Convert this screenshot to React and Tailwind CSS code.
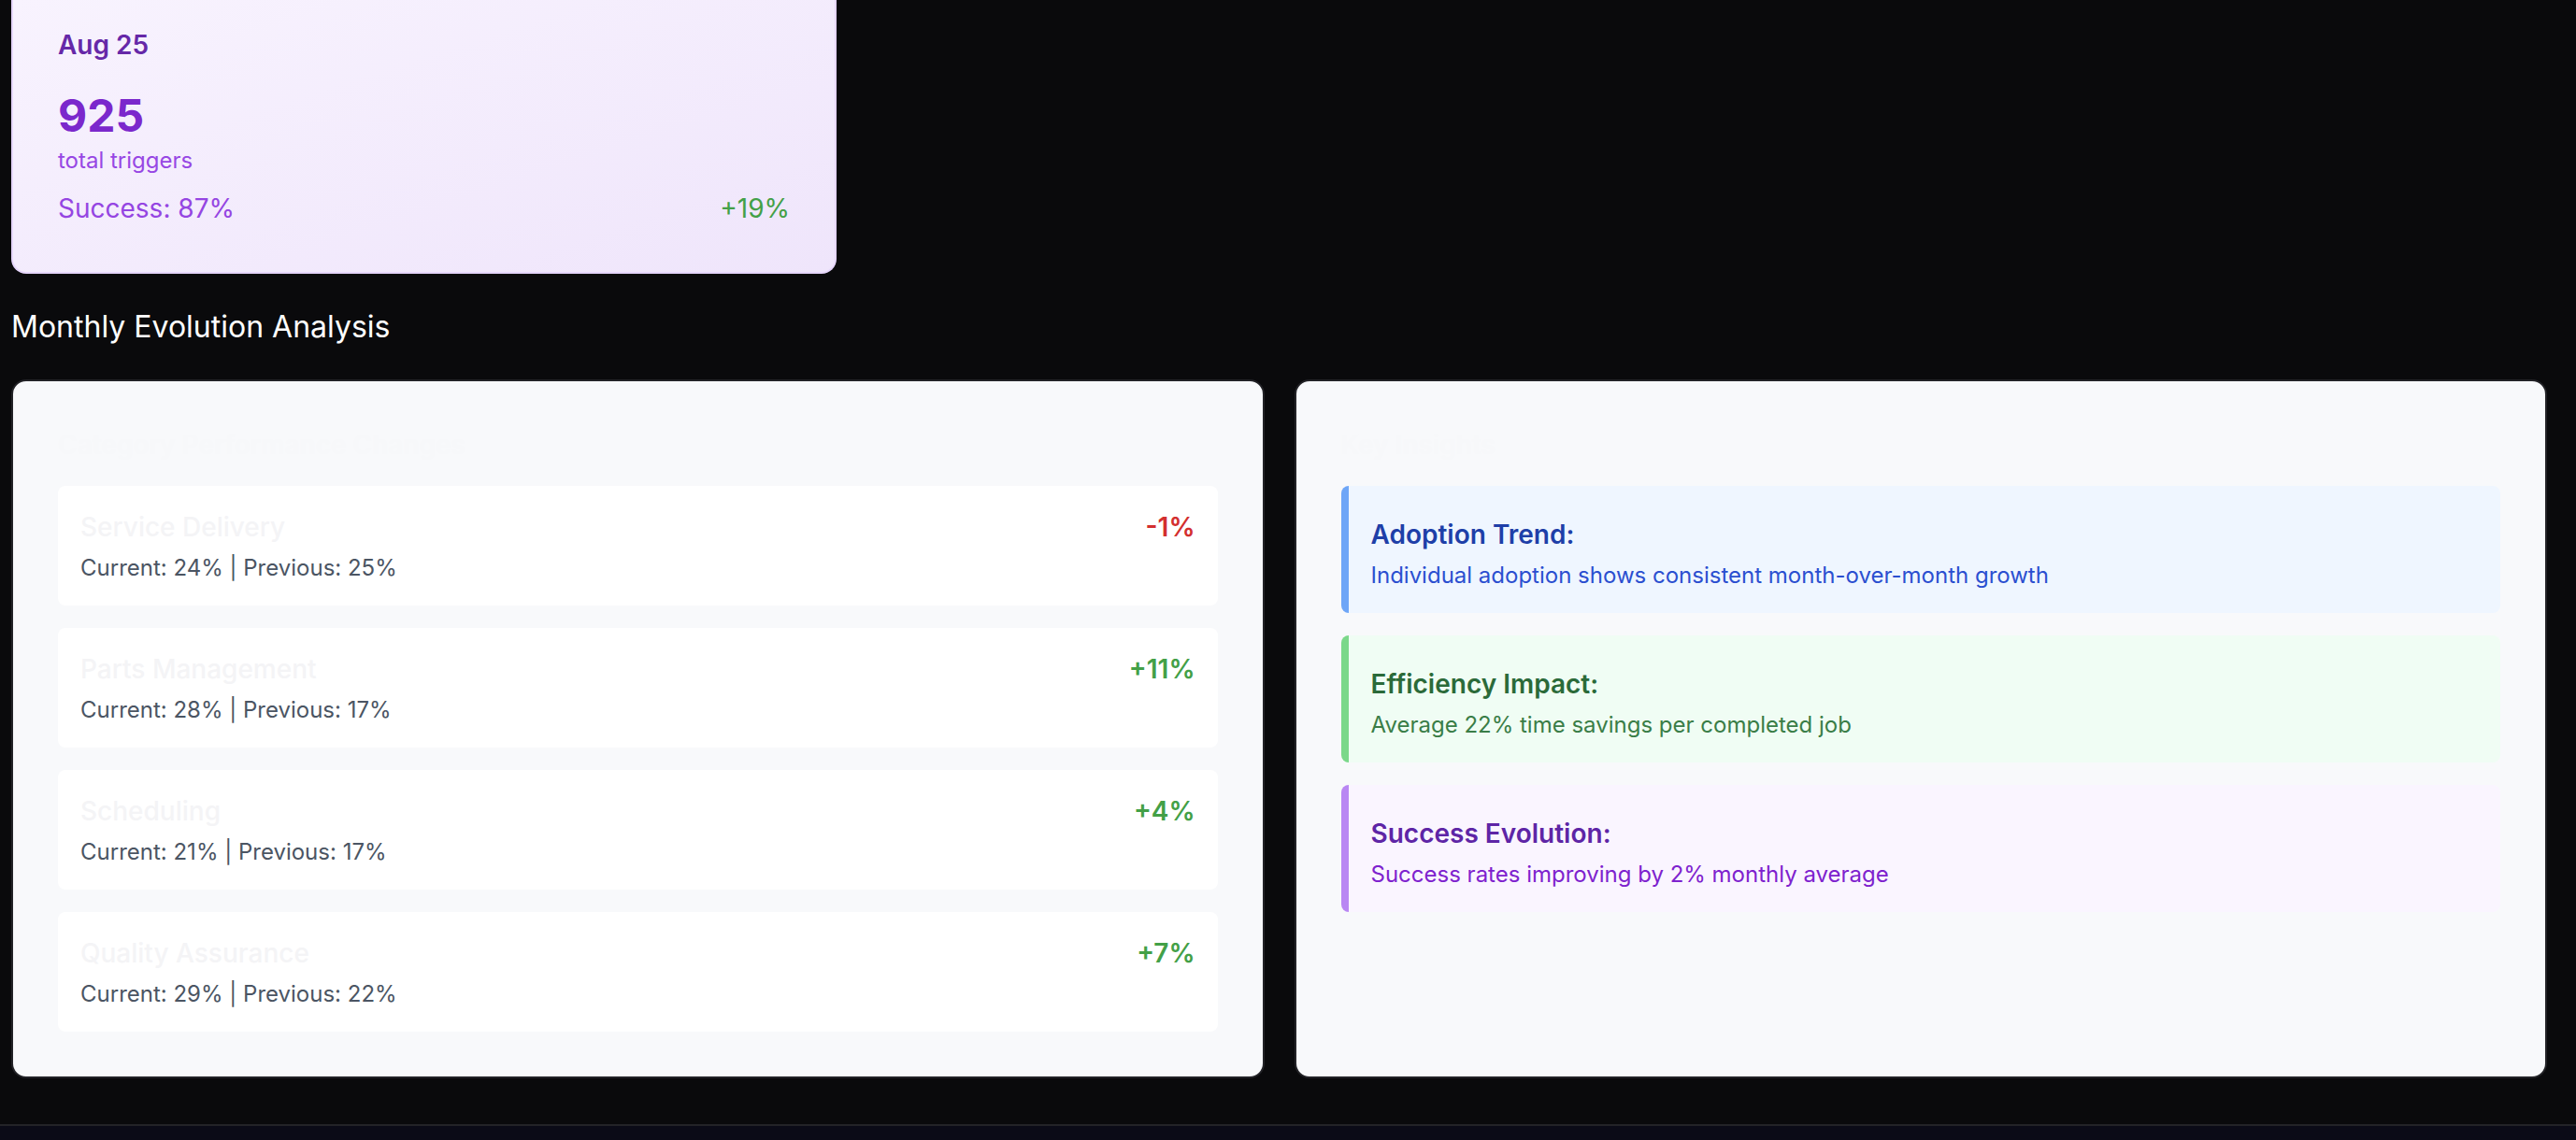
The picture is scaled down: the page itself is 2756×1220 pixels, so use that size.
import React from "react";

const categories = [
  { name: "Service Delivery", current: 24, previous: 25 },
  { name: "Parts Management", current: 28, previous: 17 },
  { name: "Scheduling", current: 21, previous: 17 },
  { name: "Quality Assurance", current: 29, previous: 22 },
];

const insights = [
  {
    title: "Adoption Trend:",
    text: "Individual adoption shows consistent month-over-month growth",
    box: "bg-[#eff6ff] border-[#6ea6f7]",
    head: "text-[#1e3fa8]",
    body: "text-[#2b4fd0]",
  },
  {
    title: "Efficiency Impact:",
    text: "Average 22% time savings per completed job",
    box: "bg-[#f0fdf4] border-[#7bd88a]",
    head: "text-[#2b6a39]",
    body: "text-[#3a7d47]",
  },
  {
    title: "Success Evolution:",
    text: "Success rates improving by 2% monthly average",
    box: "bg-[#faf5ff] border-[#b987f3]",
    head: "text-[#5e25a6]",
    body: "text-[#7e22ce]",
  },
];

const App = () => {
  return (
    <div className="min-h-screen bg-[#0a0a0c] font-['Inter','Liberation_Sans',sans-serif]">
      <main className="pl-[12px] pr-[31px] pb-[49px]">
        <section className="grid grid-cols-3 gap-[32px]">
          <article className="rounded-b-[16px] border-2 border-t-0 border-[#e6d6fb] bg-linear-to-br from-[#f8f3fe] to-[#efe5fb] px-[48px] pt-[28px] pb-[48px]">
            <div className="text-[28px] leading-[40px] font-semibold text-[#6628a8]">Aug 25</div>
            <div className="mt-[28px] text-[48px] leading-[56px] font-bold text-[#7b28cc]">925</div>
            <div className="mt-[4px] text-[24px] leading-[32px] text-[#9747e4]">total triggers</div>
            <div className="mt-[15px] flex justify-between text-[28px] leading-[40px]">
              <span className="text-[#9545e2]">Success: 87%</span>
              <span className="text-[#43a047]">+19%</span>
            </div>
          </article>
        </section>

        <h2 className="mt-[33px] mb-[32px] text-[32px] leading-[48px] text-white">Monthly Evolution Analysis</h2>

        <section className="grid grid-cols-2 gap-[32px]">
          <div className="rounded-[16px] border-2 border-[#222226] bg-[#f8f9fb] p-[48px]">
            <h3 className="mb-[24px] text-[28px] leading-[40px] font-semibold text-[#f7f8fa]">Category Performance Changes</h3>
            <div className="flex flex-col gap-[24px]">
              {categories.map((c) => {
                const diff = c.current - c.previous;
                return (
                  <div key={c.name} className="flex items-start justify-between rounded-[8px] bg-white p-[24px]">
                    <div>
                      <div className="text-[28px] leading-[40px] font-medium text-[#f4f4f6]">{c.name}</div>
                      <div className="mt-[8px] text-[24px] leading-[32px] text-[#4b5563]">
                        Current: {c.current}% | Previous: {c.previous}%
                      </div>
                    </div>
                    <div className={`text-[28px] leading-[40px] font-semibold ${diff < 0 ? "text-[#d32f2f]" : "text-[#43a047]"}`}>
                      {diff > 0 ? "+" : ""}
                      {diff}%
                    </div>
                  </div>
                );
              })}
            </div>
          </div>

          <div className="rounded-[16px] border-2 border-[#222226] bg-[#f8f9fb] p-[48px]">
            <h3 className="mb-[24px] text-[28px] leading-[40px] font-semibold text-[#f7f8fa]">Key Insights</h3>
            <div className="flex flex-col gap-[24px]">
              {insights.map((i) => (
                <div key={i.title} className={`rounded-[8px] border-l-[8px] px-[24px] pt-[24px] pb-[24px] ${i.box}`}>
                  <div className={`text-[28px] leading-[56px] font-semibold ${i.head}`}>{i.title}</div>
                  <div className={`text-[24px] leading-[32px] ${i.body}`}>{i.text}</div>
                </div>
              ))}
            </div>
          </div>
        </section>
      </main>
      <footer className="h-[20px] border-t-2 border-[#232327] bg-[#0b0b17]"></footer>
    </div>
  );
};

export default App;
